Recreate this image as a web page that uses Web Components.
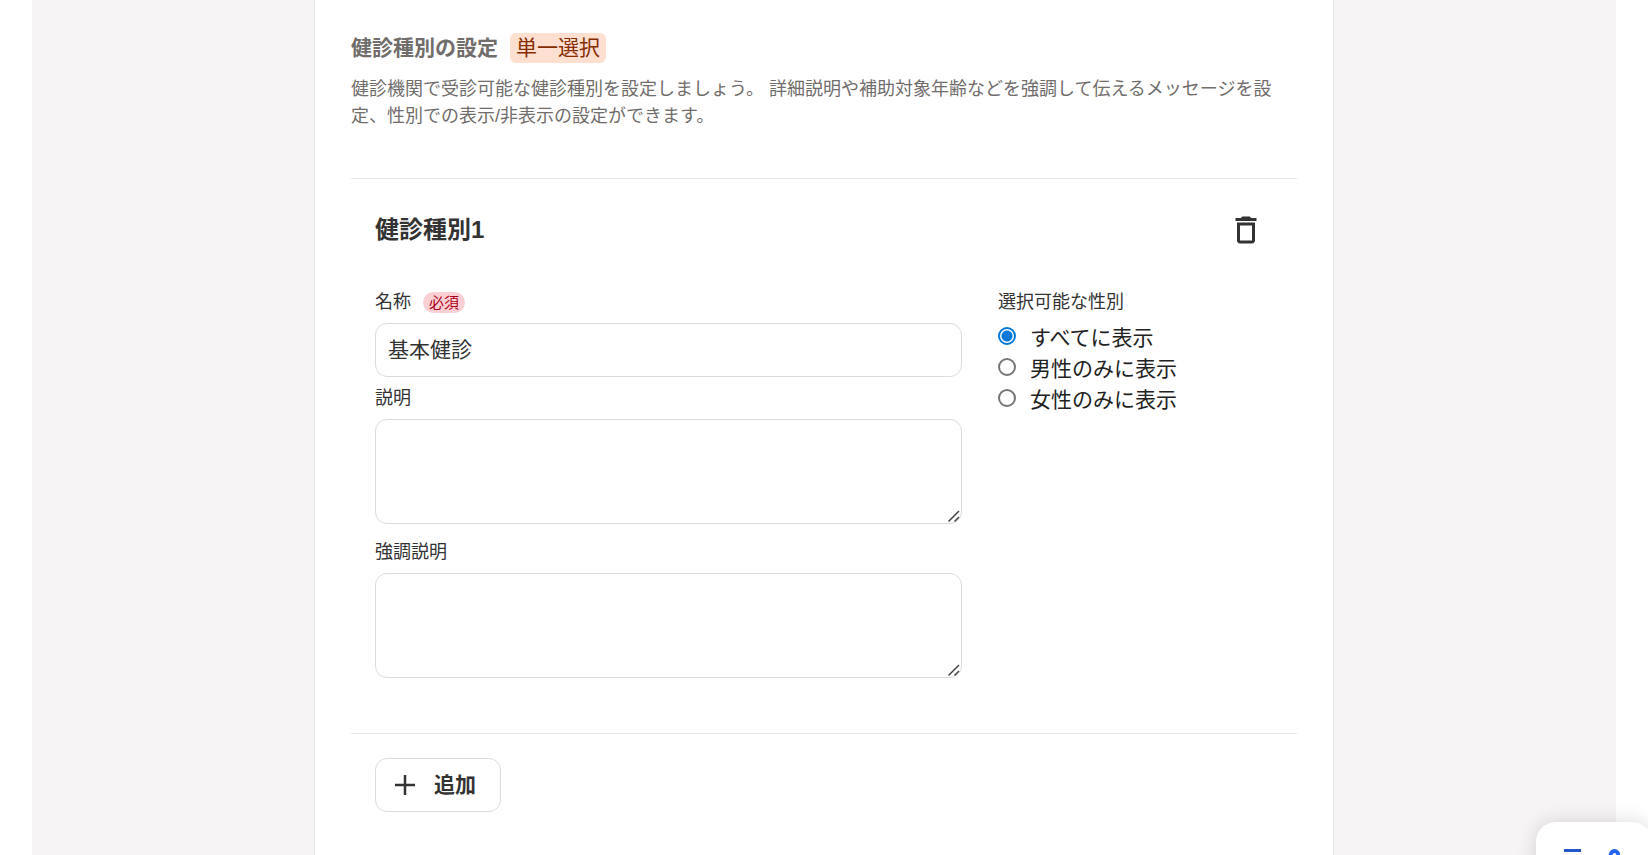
<!DOCTYPE html>
<html lang="ja">
<head>
<meta charset="utf-8">
<meta name="viewport" content="width=device-width, initial-scale=1">
<title>健診種別の設定</title>
<style>
  :root {
    --color-text: #333;
    --color-text-muted: #706d6b;
    --color-border: #dcdcdc;
    --color-divider: #e6e6e6;
    --color-page: #f6f4f5;
    --color-accent: #0078d7;
    --radius-md: 12px;
  }
  body {
    margin: 0;
    min-height: 100vh;
    overflow: hidden;
    background: #fff;
    color: var(--color-text);
    font-family: "Liberation Sans", "Noto Sans CJK JP", sans-serif;
    font-size: 21px;
    line-height: 32px;
  }
</style>
</head>
<body>

<settings-page>
  <section-header heading="健診種別の設定" badge="単一選択">
    健診機関で受診可能な健診種別を設定しましょう。 詳細説明や補助対象年齢などを強調して伝えるメッセージを設定、性別での表示/非表示の設定ができます。
  </section-header>
  <exam-type-card heading="健診種別1">
    <form-field label="名称" value="基本健診" required></form-field>
    <form-field label="説明" multiline></form-field>
    <form-field label="強調説明" multiline></form-field>
    <radio-list slot="side" label="選択可能な性別" options="すべてに表示,男性のみに表示,女性のみに表示"></radio-list>
  </exam-type-card>
  <add-button>追加</add-button>
</settings-page>
<floating-widget></floating-widget>

<script>
const attach = (el, html) => {
  const template = document.createElement('template');
  template.innerHTML = html;
  el.attachShadow({mode:'open'}).appendChild(template.content.cloneNode(true));
  return el.shadowRoot;
};

class SettingsPage extends HTMLElement {
  constructor() {
    super();
    attach(this, `
      <style>
        :host { display:flex; justify-content:center; margin:0 32px; background:var(--color-page); }
        main { box-sizing:border-box; width:100%; max-width:1020px; min-height:100vh; padding:32px 36px 36px; background:#fff; border:solid var(--color-divider); border-width:0 1px; }
      </style>
      <main><slot></slot></main>
    `);
  }
}

class SectionHeader extends HTMLElement {
  constructor() {
    super();
    const root = attach(this, `
      <style>
        :host { display:block; padding-bottom:48px; color:var(--color-text-muted); }
        header { display:flex; align-items:center; gap:12px; }
        h2 { margin:0; font-size:21px; line-height:32px; }
        .badge { padding:0 6px; border-radius:6px; background:#ffdfd0; color:#872d00; line-height:30px; }
        p { margin:12px 0 0; font-size:18px; line-height:27px; }
      </style>
      <header><h2></h2><span class="badge"></span></header>
      <p><slot></slot></p>
    `);
    root.querySelector('h2').textContent = this.getAttribute('heading');
    root.querySelector('.badge').textContent = this.getAttribute('badge');
  }
}

class ExamTypeCard extends HTMLElement {
  constructor() {
    super();
    const root = attach(this, `
      <style>
        :host { display:block; padding:24px 24px 48px; border:solid var(--color-divider); border-width:1px 0; }
        header { display:flex; align-items:center; justify-content:space-between; }
        h3 { margin:0; font-size:24px; line-height:36px; }
        button { display:flex; padding:9px; border:0; background:none; color:inherit; cursor:pointer; }
        svg { width:36px; height:36px; fill:currentColor; }
        .columns { display:grid; grid-template-columns:32fr 15fr; gap:36px; margin-top:32px; }
        .fields { display:grid; gap:8px; }
      </style>
      <header>
        <h3></h3>
        <button type="button" aria-label="削除">
          <svg viewBox="0 0 24 24"><path d="M6 19c0 1.100.9 2 2 2h8c1.100 0 2-.9 2-2V7H6v12zM8 9h8v10H8V9zm7.500-5l-1-1h-5l-1 1H5v2h14V4z"/></svg>
        </button>
      </header>
      <div class="columns">
        <div class="fields"><slot></slot></div>
        <slot name="side"></slot>
      </div>
    `);
    root.querySelector('h3').textContent = this.getAttribute('heading');
  }
}

class FormField extends HTMLElement {
  constructor() {
    super();
    const multiline = this.hasAttribute('multiline');
    const root = attach(this, `
      <style>
        :host { display:block; }
        .head { display:flex; align-items:center; gap:12px; margin-bottom:7px; font-size:18px; line-height:27px; }
        .required { padding:0 6px; border-radius:12px; background:#fbd0d5; color:#b00020; font-size:15px; line-height:21px; }
        input, textarea { display:block; box-sizing:border-box; width:100%; padding:0 12px; border:1px solid var(--color-border); border-radius:var(--radius-md); background:#fff; color:inherit; font:inherit; }
        input { height:54px; padding-bottom:4px; }
        textarea { height:105px; margin-bottom:7px; padding:12px; resize:vertical; }
        textarea::-webkit-resizer { background:url("data:image/svg+xml,%3Csvg xmlns='http://www.w3.org/2000/svg' viewBox='0 0 15 15'%3E%3Cpath d='M2.500 13.500L13 3M8.500 13.500L13 9' stroke='%23444' stroke-width='1.500'/%3E%3C/svg%3E") no-repeat; }
      </style>
      <div class="head">
        <label for="control"></label>
        ${this.hasAttribute('required') ? '<span class="required">必須</span>' : ''}
      </div>
      ${multiline ? '<textarea id="control"></textarea>' : '<input id="control" type="text">'}
    `);
    root.querySelector('label').textContent = this.getAttribute('label');
    root.querySelector('#control').value = this.getAttribute('value') || '';
  }
}

class RadioList extends HTMLElement {
  constructor() {
    super();
    const root = attach(this, `
      <style>
        :host { display:block; }
        fieldset { margin:0; padding:0; border:0; }
        legend { margin-bottom:6px; padding:0; font-size:18px; line-height:27px; }
        .option { display:flex; align-items:flex-start; gap:14px; color:#222; line-height:31px; }
        input { appearance:none; box-sizing:border-box; flex:none; width:18px; height:18px; margin:5px 0 0; border:2px solid #767676; border-radius:50%; background:#fff; }
        input:checked { border-color:var(--color-accent); background:radial-gradient(circle, var(--color-accent) 5px, #fff 6px); }
      </style>
      <fieldset><legend></legend></fieldset>
    `);
    root.querySelector('legend').textContent = this.getAttribute('label');
    this.getAttribute('options').split(',').forEach((text, i) => {
      const row = document.createElement('div');
      row.className = 'option';
      row.innerHTML = `<input type="radio" name="gender" id="option-${i}"><label for="option-${i}">${text}</label>`;
      row.querySelector('input').checked = i === 0;
      root.querySelector('fieldset').appendChild(row);
    });
  }
}

class AddButton extends HTMLElement {
  constructor() {
    super();
    attach(this, `
      <style>
        :host { display:block; padding:24px 24px 0; }
        button { display:flex; align-items:center; gap:11px; height:54px; padding:0 24px 0 11px; border:1px solid var(--color-border); border-radius:var(--radius-md); background:#fff; color:inherit; font:inherit; font-weight:bold; cursor:pointer; }
        svg { width:36px; height:36px; fill:none; stroke:currentColor; stroke-width:2.500; }
      </style>
      <button type="button">
        <svg viewBox="0 0 36 36"><path d="M8 18h20M18 8v20"/></svg>
        <slot></slot>
      </button>
    `);
  }
}

class FloatingWidget extends HTMLElement {
  constructor() {
    super();
    attach(this, `
      <style>
        :host { position:fixed; right:-4px; bottom:-39px; }
        button { display:flex; align-items:center; width:116px; height:72px; padding:0 24px; border:0; border-radius:20px; background:#fff; box-shadow:0 0 20px rgba(0,0,0,.15); cursor:pointer; }
        svg { flex:none; width:64px; height:24px; fill:none; stroke:#2458c8; stroke-width:3; }
      </style>
      <button type="button" aria-label="メニュー">
        <svg viewBox="0 0 64 24"><path d="M4 4.500h17M4 12h17M4 19.500h17"/><ellipse cx="54.500" cy="10" rx="4" ry="5" stroke="#2563eb" stroke-width="4"/></svg>
      </button>
    `);
  }
}

customElements.define('settings-page', SettingsPage);
customElements.define('section-header', SectionHeader);
customElements.define('exam-type-card', ExamTypeCard);
customElements.define('form-field', FormField);
customElements.define('radio-list', RadioList);
customElements.define('add-button', AddButton);
customElements.define('floating-widget', FloatingWidget);
</script>
</body>
</html>
